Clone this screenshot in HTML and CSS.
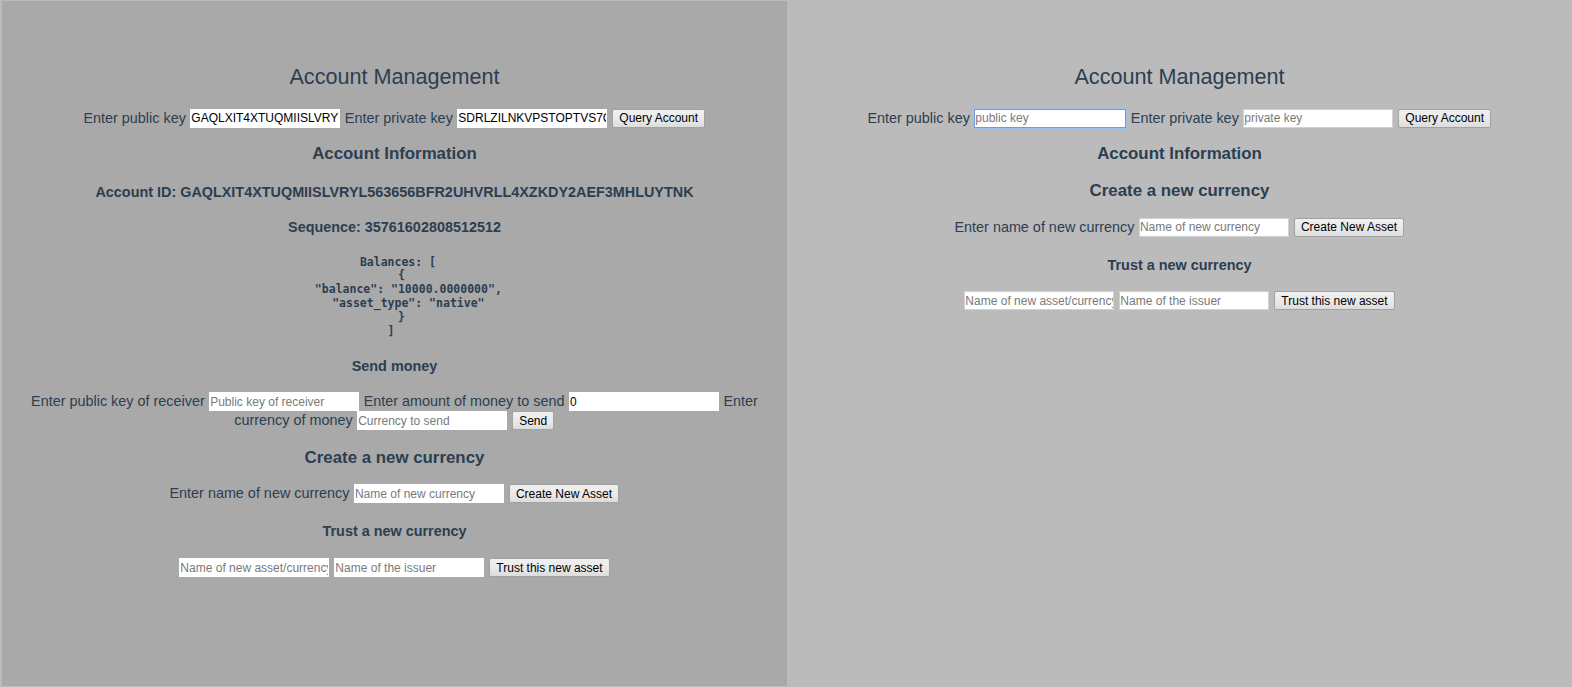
FILE: index.html
```html
<!DOCTYPE html>
<html lang="en">
<head>
<meta charset="utf-8">
<title>Account Management</title>
<link rel="stylesheet" href="styles.css">
</head>
<body>
<div class="split">
  <section class="panel panel-dark">
    <h2 class="title">Account Management</h2>
    <div class="row row-top">
      <label>Enter public key</label> <input class="field plain" type="text" value="GAQLXIT4XTUQMIISLVRYL563656BFR2UHVRLL4XZKDY2AEF3MHLUYTNK"> <label>Enter private key</label> <input class="field plain" type="text" value="SDRLZILNKVPSTOPTVS7CQ4M2XKJ7PLA5RZ3HWDT6YQNB2EVO5GFLKRAM"> <button class="btn">Query Account</button>
    </div>
    <h3 class="section">Account Information</h3>
    <h4 class="info info-first">Account ID: GAQLXIT4XTUQMIISLVRYL563656BFR2UHVRLL4XZKDY2AEF3MHLUYTNK</h4>
    <h4 class="info">Sequence: 35761602808512512</h4>
<pre class="balances"> Balances: [
  {
    "balance": "10000.0000000",
    "asset_type": "native"
  }
] </pre>
    <h4 class="sub sub-send">Send money</h4>
    <div class="row row-after-sub">
      <label>Enter public key of receiver</label> <input class="field plain" type="text" placeholder="Public key of receiver"> <label>Enter amount of money to send</label> <input class="field plain" type="text" value="0"> <label>Enter currency of money</label> <input class="field plain" type="text" placeholder="Currency to send"> <button class="btn">Send</button>
    </div>
    <h3 class="section section-create">Create a new currency</h3>
    <div class="row row-after-section">
      <label>Enter name of new currency</label> <input class="field plain" type="text" placeholder="Name of new currency"> <button class="btn">Create New Asset</button>
    </div>
    <h4 class="sub">Trust a new currency</h4>
    <div class="row row-after-sub">
      <input class="field plain" type="text" placeholder="Name of new asset/currency"> <input class="field plain" type="text" placeholder="Name of the issuer"> <button class="btn">Trust this new asset</button>
    </div>
  </section>
  <section class="panel panel-light">
    <h2 class="title">Account Management</h2>
    <div class="row row-top">
      <label>Enter public key</label> <input class="field bordered focused" type="text" placeholder="public key"> <label>Enter private key</label> <input class="field bordered" type="text" placeholder="private key"> <button class="btn">Query Account</button>
    </div>
    <h3 class="section">Account Information</h3>
    <h3 class="section section-create-r">Create a new currency</h3>
    <div class="row row-after-section">
      <label>Enter name of new currency</label> <input class="field bordered" type="text" placeholder="Name of new currency"> <button class="btn">Create New Asset</button>
    </div>
    <h4 class="sub sub-trust-r">Trust a new currency</h4>
    <div class="row row-after-sub">
      <input class="field bordered" type="text" placeholder="Name of new asset/currency"> <input class="field bordered" type="text" placeholder="Name of the issuer"> <button class="btn">Trust this new asset</button>
    </div>
  </section>
</div>
</body>
</html>
```

FILE: styles.css
```css
html, body {
  margin: 0;
  padding: 0;
}

body {
  background: #bbbbbb;
  font-family: "Liberation Sans", Arial, Helvetica, sans-serif;
  color: #2c3e50;
}

.split {
  display: grid;
  grid-template-columns: 1fr 1fr;
  height: 685px;
  padding: 1px 0 1px 2px;
}

.panel {
  text-align: center;
  padding: 0 12px;
  overflow: hidden;
}

.panel-dark {
  background: #a9a9a9;
}

.panel-light {
  background: #bbbbbb;
}

.title {
  margin: 62.7px 0 0;
  font-size: 21.6px;
  font-weight: normal;
  line-height: 25px;
}

.row {
  font-size: 14.4px;
  line-height: 19px;
}

.row-top {
  margin-top: 20px;
}

.row-after-section {
  margin-top: 16.6px;
}

.row-after-sub {
  margin-top: 17.6px;
}

.section {
  margin: 16.6px 0 0;
  font-size: 16.85px;
  font-weight: bold;
  line-height: 20px;
}

.section-create {
  margin-top: 17.6px;
}

.section-create-r {
  margin-top: 17px;
}

.info {
  margin: 18px 0 0;
  font-size: 14.4px;
  line-height: 17px;
}

.info-first {
  margin-top: 19.6px;
}

.sub {
  margin: 20.1px 0 0;
  font-size: 14.4px;
  font-weight: bold;
  line-height: 17px;
}

.sub-send {
  margin-top: 18.6px;
}

.sub-trust-r {
  margin-top: 20px;
}

.balances {
  margin: 19.7px 0 0;
  font-family: "DejaVu Sans Mono", "Liberation Mono", monospace;
  font-size: 11.5px;
  font-weight: bold;
  line-height: 13.9px;
  text-align: center;
  white-space: pre;
}

.field {
  box-sizing: border-box;
  width: 150px;
  height: 19px;
  margin: 0 0.5px;
  padding: 1px 0;
  font-family: "Liberation Sans", Arial, sans-serif;
  font-size: 12px;
  color: #000;
  background: #fff;
  vertical-align: top;
  border-radius: 0;
  outline: none;
}

.field::placeholder {
  color: #7a7a7a;
}

.plain {
  border: 1px solid #ffffff;
}

.bordered {
  border: 1px solid #d2d2d2;
}

.focused {
  border: 1px solid #6f9ee0;
  box-shadow: 0 0 0 1px #9dbfec;
  width: 152px;
}

.btn {
  box-sizing: border-box;
  height: 19px;
  margin: 0 0.5px;
  padding: 0 6px;
  font-family: "Liberation Sans", Arial, sans-serif;
  font-size: 12px;
  line-height: 14px;
  color: #000;
  background: linear-gradient(#f0f0f0, #e8e8e8 60%, #dcdcdc);
  border: 1px solid #a2a2a2;
  border-radius: 2px;
  vertical-align: top;
}
```
